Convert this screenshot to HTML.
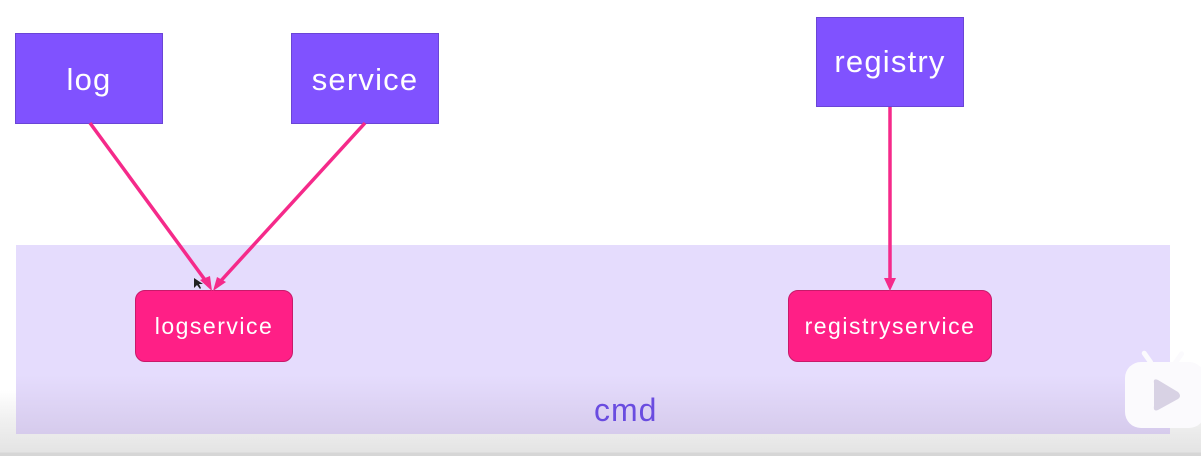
<!DOCTYPE html>
<html><head><meta charset="utf-8"><style>
body{margin:0;width:1201px;height:456px;overflow:hidden;position:relative;font-family:"Liberation Sans",sans-serif;
background:linear-gradient(#fff 0,#fff 390px,#f0f0f0 420px,#e4e4e4 452px,#d6d6d6 453px,#d6d6d6 456px);}
.area{position:absolute;left:16px;top:245px;width:1154px;height:189px;background:linear-gradient(#e5dcfd 0,#e5dcfd 130px,#d6cbec 189px);}
.box{position:absolute;background:#8052ff;border:1px solid #6a45d6;color:#fff;font-size:31px;letter-spacing:1.2px;display:flex;align-items:center;justify-content:center;box-sizing:border-box;}
.pill{position:absolute;background:#ff1f86;border:1px solid #c81a6a;border-radius:10px;color:#fff;font-size:23px;letter-spacing:1.5px;display:flex;align-items:center;justify-content:center;box-sizing:border-box;}
.cmd{position:absolute;left:594px;top:392px;font-size:32px;letter-spacing:1px;color:#6a4ce0;}
</style></head><body>
<div class="area"></div>
<div class="box" style="left:15px;top:33px;width:148px;height:91px;padding-top:2px;">log</div>
<div class="box" style="left:291px;top:33px;width:148px;height:91px;padding-top:2px;">service</div>
<div class="box" style="left:816px;top:17px;width:148px;height:90px;">registry</div>
<div class="pill" style="left:135px;top:290px;width:158px;height:72px;">logservice</div>
<div class="pill" style="left:788px;top:290px;width:204px;height:72px;">registryservice</div>
<div class="cmd">cmd</div>
<svg style="position:absolute;left:0;top:0" width="1201" height="456">
<g stroke="#f52a8a" stroke-width="3.5" fill="none">
<line x1="90" y1="123" x2="208" y2="284"/>
<line x1="365" y1="123" x2="218" y2="284"/>
<line x1="890" y1="107" x2="890" y2="282"/>
</g>
<g fill="#f52a8a">
<polygon points="212,291 200,280 210,276"/>
<polygon points="213,291 217,277 226,282"/>
<polygon points="890,291 884,278 896,278"/>
</g>
<polygon points="194,278 194,288 197,285 200,289 201,288 199,284 203,284" fill="#222"/>
<g fill="#fbfafd">
<rect x="1125" y="362" width="80" height="66" rx="16"/>
<rect x="1145" y="350" width="5" height="16" rx="2.5" transform="rotate(-35 1147 358)"/>
<rect x="1176" y="350" width="5" height="16" rx="2.5" transform="rotate(35 1178 358)"/>
</g>
<path d="M1154 383 Q1153 378 1158 380 L1178 392 Q1182 396 1178 399 L1158 410 Q1153 412 1154 406 Z" fill="#d8d2e4"/>
</svg>
</body></html>
